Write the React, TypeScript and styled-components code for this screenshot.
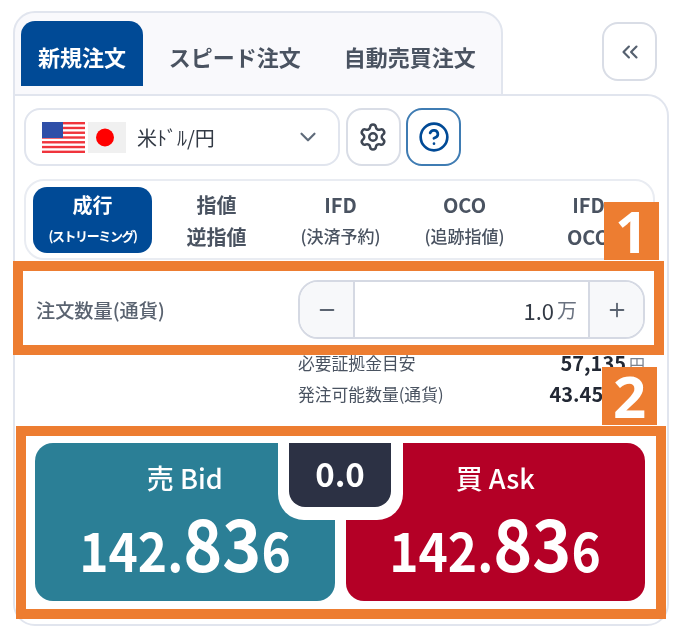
import React from 'react'
import styled, { createGlobalStyle } from 'styled-components'
import { ChevronDown, ChevronsLeft, CircleHelp, Minus, Plus, Settings } from 'lucide-react'

const GlobalStyle = createGlobalStyle`
  html, body {
    margin: 0;
    background: #fff;
    font-family: "Noto Sans CJK JP", "Noto Sans", sans-serif;
  }
  * {
    box-sizing: border-box;
  }
`

const Page = styled.div`
  position: relative;
  width: 684px;
  height: 640px;
  padding: 11px 0 0 13px;
  overflow: hidden;
`

// the reference is a slightly soft upscale, the orange marks on top of it are not
const Soft = styled.div`
  filter: blur(0.45px);
`

const Header = styled.div`
  display: flex;
  align-items: flex-start;
`

const TabList = styled.div`
  display: flex;
  gap: 8.8px;
  width: 490px;
  height: 85px;
  margin-bottom: -2px;
  padding: 8px 0 0 6px;
  background: #f9f9fc;
  border: 2px solid #e1e5ee;
  border-radius: 22px 22px 0 0;
`

const Tab = styled.div<{ $active?: boolean }>`
  display: flex;
  align-items: center;
  justify-content: center;
  height: 65px;
  padding: 5px 17px 0;
  border-radius: 14px 14px 0 0;
  font-size: 22px;
  font-weight: 700;
  color: ${p => (p.$active ? '#fff' : '#4a5361')};
  background: ${p => (p.$active ? '#004a96' : 'transparent')};
`

const CollapseButton = styled.div`
  display: flex;
  align-items: center;
  justify-content: center;
  width: 55px;
  height: 59px;
  margin: 11px 0 0 99px;
  background: #fff;
  border: 2px solid #d9dde6;
  border-radius: 16px;
  color: #55606f;
`

const Panel = styled.div`
  position: relative;
  width: 656px;
  height: 532px;
  padding: 12px 12px 0 9px;
  background: #fff;
  border: 2px solid #e1e5ee;
  border-radius: 0 22px 22px 22px;
`

const SelectRow = styled.div`
  display: flex;
  gap: 5.5px;
`

const PairSelect = styled.div`
  display: flex;
  align-items: center;
  width: 316px;
  height: 58px;
  padding: 0 17px 0 16px;
  border: 2px solid #e1e5ee;
  border-radius: 16px;
  font-size: 20px;
  color: #333a45;
`

const Flags = styled.div`
  display: flex;
  gap: 3px;
  margin-right: 11px;
`

const PairName = styled.span`
  flex: 1;
`

const IconButton = styled.div<{ $active?: boolean }>`
  display: flex;
  align-items: center;
  justify-content: center;
  width: 55px;
  height: 58px;
  border: 2px solid ${p => (p.$active ? '#3f7cb3' : '#d9dde6')};
  border-radius: 16px;
  color: ${p => (p.$active ? '#004a96' : '#3f4754')};
`

const OrderTypes = styled.div`
  display: grid;
  grid-template-columns: repeat(5, 124px);
  height: 81px;
  margin-top: 13px;
  padding: 6px 3px 0 4px;
  border: 2px solid #e9ecf2;
  border-radius: 20px;
`

const OrderType = styled.div<{ $active?: boolean }>`
  display: flex;
  flex-direction: column;
  align-items: center;
  height: 66px;
  margin: 0 2px 0 3px;
  border-radius: 14px;
  color: ${p => (p.$active ? '#fff' : '#4a5361')};
  background: ${p => (p.$active ? '#004a96' : 'transparent')};
`

const TypeLine = styled.div<{ $size: 'large' | 'note' | 'tiny' }>`
  height: ${p => (p.$size === 'large' ? '32px' : '34px')};
  line-height: ${p => (p.$size === 'large' ? '36px' : '34px')};
  font-size: ${p => ({ large: '20px', note: '17px', tiny: '13px' })[p.$size]};
  font-weight: ${p => (p.$size === 'note' ? 500 : 700)};
  letter-spacing: ${p => (p.$size === 'tiny' ? '-1.4px' : '0')};
  white-space: nowrap;
`

const QuantityRow = styled.div`
  display: flex;
  align-items: center;
  justify-content: space-between;
  margin-top: 20px;
  padding: 0 10px 0 12px;
`

const QuantityLabel = styled.div`
  font-size: 19.2px;
  font-weight: 500;
  color: #5a6370;
`

const Stepper = styled.div`
  display: flex;
  width: 347px;
  height: 59px;
  overflow: hidden;
  border: 2px solid #d5d9e3;
  border-radius: 20px;
`

const StepButton = styled.div`
  display: flex;
  align-items: center;
  justify-content: center;
  width: 53px;
  background: #f7f8fa;
  color: #5a6370;
`

const StepValue = styled.div`
  display: flex;
  flex: 1;
  align-items: center;
  justify-content: flex-end;
  gap: 3px;
  padding-right: 11px;
  border-left: 2px solid #d5d9e3;
  border-right: 2px solid #d5d9e3;
  font-size: 22px;
  color: #333a45;
`

const StepUnit = styled.span`
  font-size: 20px;
  color: #6a7280;
`

const InfoList = styled.div`
  width: 347px;
  margin: 8px 10px 0 auto;
`

const InfoRow = styled.div`
  display: flex;
  align-items: center;
  justify-content: space-between;
  height: 31px;
  font-size: 16.8px;
  color: #4a5361;
`

const InfoValue = styled.span`
  font-size: 20px;
  font-weight: 700;
  color: #222834;
`

const InfoUnit = styled.span<{ $gap: number }>`
  margin-left: ${p => p.$gap}px;
  font-size: 16px;
  font-weight: 400;
  color: #7a828e;
`

const TradeRow = styled.div`
  position: relative;
  display: flex;
  gap: 11px;
  margin: 34px 10px 0 11px;
`

const TradeButton = styled.div<{ $side: 'bid' | 'ask' }>`
  display: flex;
  flex: 1;
  flex-direction: column;
  align-items: center;
  height: 158px;
  border-radius: 18px;
  color: #fff;
  background: ${p => (p.$side === 'bid' ? '#2b7f96' : '#b40026')};
`

const TradeLabel = styled.div`
  margin-top: 14px;
  font-size: 27px;
  font-weight: 500;
  line-height: 42px;
`

const Price = styled.div`
  font-size: 54px;
  font-weight: 700;
  line-height: 84px;
  white-space: nowrap;
  transform: scaleX(0.92);
`

const PriceBig = styled.span`
  font-size: 72px;
`

const SpreadCut = styled.div`
  position: absolute;
  top: 0;
  left: 243px;
  width: 125px;
  height: 77px;
  padding: 0 12px 13px 11px;
  background: #fff;
  border-radius: 0 0 26px 26px;
`

const Spread = styled.div`
  display: flex;
  align-items: center;
  justify-content: center;
  height: 100%;
  padding-bottom: 5px;
  border-radius: 0 0 16px 16px;
  background: #2c3144;
  color: #fff;
  font-size: 33px;
  font-weight: 700;
`

const Frame = styled.div<{ $x: number; $y: number; $w: number; $h: number }>`
  position: absolute;
  left: ${p => p.$x}px;
  top: ${p => p.$y}px;
  width: ${p => p.$w}px;
  height: ${p => p.$h}px;
  border: 10px solid #ed7d31;
  pointer-events: none;
`

const Badge = styled.div<{ $x: number; $y: number }>`
  position: absolute;
  left: ${p => p.$x}px;
  top: ${p => p.$y}px;
  display: flex;
  align-items: center;
  justify-content: center;
  width: 55px;
  height: 58px;
  background: #ed7d31;
  color: #fff;
  font-family: "Noto Sans", sans-serif;
  font-size: 58px;
  font-weight: 700;
  line-height: 1;
`

const UsFlag = () => (
  <svg width="43" height="31" viewBox="0 0 43 31">
    <rect width="43" height="31" fill="#fff" />
    {[0, 1, 2, 3, 4, 5, 6].map(i => (
      <rect key={i} y={i * 4.77} width="43" height="2.4" fill="#f0343c" />
    ))}
    <rect width="21" height="16" fill="#2f4fa8" />
  </svg>
)

const JpFlag = () => (
  <svg width="38" height="31" viewBox="0 0 38 31">
    <rect width="38" height="31" fill="#f0f0f0" />
    <circle cx="17" cy="15.5" r="9" fill="#f00" />
  </svg>
)

const orderTypes: { first: string; second: string; size: 'large' | 'note' }[] = [
  { first: '指値', second: '逆指値', size: 'large' },
  { first: 'IFD', second: '(決済予約)', size: 'note' },
  { first: 'OCO', second: '(追跡指値)', size: 'note' },
  { first: 'IFD', second: 'OCO', size: 'large' },
]

const PriceText = () => (
  <Price>
    142.<PriceBig>83</PriceBig>6
  </Price>
)

const App: React.FC = () => (
  <Page>
    <GlobalStyle />
    <Soft>
      <Header>
        <TabList>
          <Tab $active>新規注文</Tab>
          <Tab>スピード注文</Tab>
          <Tab>自動売買注文</Tab>
        </TabList>
        <CollapseButton>
          <ChevronsLeft size={26} strokeWidth={2} />
        </CollapseButton>
      </Header>
      <Panel>
        <SelectRow>
          <PairSelect>
            <Flags>
              <UsFlag />
              <JpFlag />
            </Flags>
            <PairName>米ﾄﾞﾙ/円</PairName>
            <ChevronDown size={26} color="#5f6b7a" />
          </PairSelect>
          <IconButton>
            <Settings size={30} strokeWidth={2} />
          </IconButton>
          <IconButton $active>
            <CircleHelp size={32} strokeWidth={2} />
          </IconButton>
        </SelectRow>
        <OrderTypes>
          <OrderType $active>
            <TypeLine $size="large">成行</TypeLine>
            <TypeLine $size="tiny">(ストリーミング)</TypeLine>
          </OrderType>
          {orderTypes.map(t => (
            <OrderType key={t.first + t.second}>
              <TypeLine $size="large">{t.first}</TypeLine>
              <TypeLine $size={t.size}>{t.second}</TypeLine>
            </OrderType>
          ))}
        </OrderTypes>
        <QuantityRow>
          <QuantityLabel>注文数量(通貨)</QuantityLabel>
          <Stepper>
            <StepButton>
              <Minus size={22} strokeWidth={2} />
            </StepButton>
            <StepValue>
              1.0<StepUnit>万</StepUnit>
            </StepValue>
            <StepButton>
              <Plus size={22} strokeWidth={2} />
            </StepButton>
          </Stepper>
        </QuantityRow>
        <InfoList>
          <InfoRow>
            必要証拠金目安
            <InfoValue>
              57,135<InfoUnit $gap={3}>円</InfoUnit>
            </InfoValue>
          </InfoRow>
          <InfoRow>
            発注可能数量(通貨)
            <InfoValue>
              43.450<InfoUnit $gap={14}>万</InfoUnit>
            </InfoValue>
          </InfoRow>
        </InfoList>
        <TradeRow>
          <TradeButton $side="bid">
            <TradeLabel>売 Bid</TradeLabel>
            <PriceText />
          </TradeButton>
          <TradeButton $side="ask">
            <TradeLabel>買 Ask</TradeLabel>
            <PriceText />
          </TradeButton>
          <SpreadCut>
            <Spread>0.0</Spread>
          </SpreadCut>
        </TradeRow>
      </Panel>
    </Soft>
    <Frame $x={13} $y={261} $w={651} $h={94} />
    <Frame $x={16} $y={426} $w={650} $h={193} />
    <Badge $x={604} $y={202}>1</Badge>
    <Badge $x={602} $y={367}>2</Badge>
  </Page>
)

export default App
